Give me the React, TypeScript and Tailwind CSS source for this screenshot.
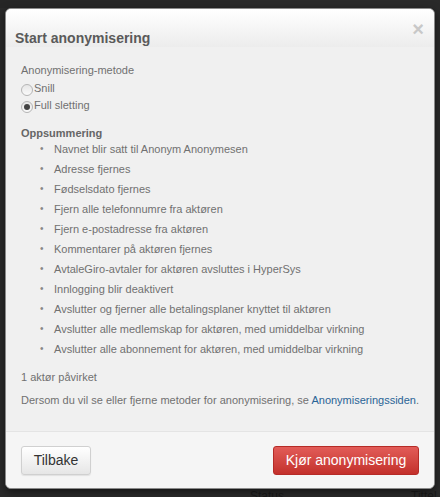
const items = [
  "Navnet blir satt til Anonym Anonymesen",
  "Adresse fjernes",
  "Fødselsdato fjernes",
  "Fjern alle telefonnumre fra aktøren",
  "Fjern e-postadresse fra aktøren",
  "Kommentarer på aktøren fjernes",
  "AvtaleGiro-avtaler for aktøren avsluttes i HyperSys",
  "Innlogging blir deaktivert",
  "Avslutter og fjerner alle betalingsplaner knyttet til aktøren",
  "Avslutter alle medlemskap for aktøren, med umiddelbar virkning",
  "Avslutter alle abonnement for aktøren, med umiddelbar virkning",
];

function Radio({ checked, label }: { checked?: boolean; label: string }) {
  return (
    <label className="flex items-center h-[17px]">
      <span className="w-[12px] h-[12px] mt-[5px] rounded-full border border-[#b5b5b5] bg-gradient-to-b from-[#e6e6e6] to-[#fafafa] flex items-center justify-center">
        {checked && <span className="w-[6px] h-[6px] rounded-full bg-[#444]" />}
      </span>
      <span className="ml-px">{label}</span>
    </label>
  );
}

export default function App() {
  return (
    <div
      className="relative w-[440px] h-[497px] overflow-hidden bg-[#2a2a2a] pt-[8px] pl-[5px]"
      style={{ fontFamily: '"Liberation Sans", Arial, sans-serif' }}
    >
      <div className="absolute left-0 top-0 w-[230px] h-[8px] bg-[#262626]" />
      <div className="absolute left-[250px] top-[487px] text-[12px] text-[#1a1a1a]">Status</div>
      <div className="absolute left-[411px] top-[487px] text-[12px] text-[#1a1a1a]">Tittel</div>

      <div className="relative w-[430px] h-[481px] rounded-[6px] overflow-hidden border border-[#8a8a8a] shadow-[0_3px_8px_rgba(0,0,0,0.5)] bg-[#f0f0f0] flex flex-col">
        <div className="h-[38px] bg-gradient-to-b from-white to-[#ececec] flex items-end justify-between pl-[9px] pr-[10px]">
          <h3 className="text-[14px] font-bold text-[#5a5a5a] leading-[18px]">Start anonymisering</h3>
          <span className="self-start mt-[10px] text-[#c8c8c8] text-[20px] leading-[20px] font-bold">×</span>
        </div>

        <div className="flex-1 px-[15px] pt-[15px] text-[11px] text-[#707070] leading-[16px]">
          <div>Anonymisering-metode</div>
          <div className="mt-px">
            <Radio label="Snill" />
            <Radio checked label="Full sletting" />
          </div>

          <div className="mt-[12px] font-bold text-[#666]">Oppsummering</div>
          <ul className="mt-[-2px] leading-[20px]">
            {items.map((t) => (
              <li key={t} className="flex">
                <span className="w-[33px] pl-[19px] text-[10px] text-[#888]">•</span>
                <span>{t}</span>
              </li>
            ))}
          </ul>

          <div className="mt-[10px]">1 aktør påvirket</div>
          <div className="mt-[7px] whitespace-nowrap">
            Dersom du vil se eller fjerne metoder for anonymisering, se{" "}
            <a className="text-[#2a6496]" href="#">Anonymiseringssiden</a>.
          </div>
        </div>

        <div className="h-[57px] border-t border-[#e4e4e4] bg-[#f5f5f5] px-[15px] pt-[14px] flex justify-between items-start">
          <button className="w-[70px] h-[29px] rounded-[3px] border border-[#d0d0d0] bg-gradient-to-b from-white to-[#e6e6e6] text-[14px] text-[#333] shadow-[0_1px_1px_rgba(0,0,0,0.08)]">
            Tilbake
          </button>
          <button className="w-[146px] h-[29px] rounded-[3px] border border-[#b52b27] bg-gradient-to-b from-[#e25c58] to-[#c3302b] text-[14px] text-white">
            Kjør anonymisering
          </button>
        </div>
      </div>
    </div>
  );
}
